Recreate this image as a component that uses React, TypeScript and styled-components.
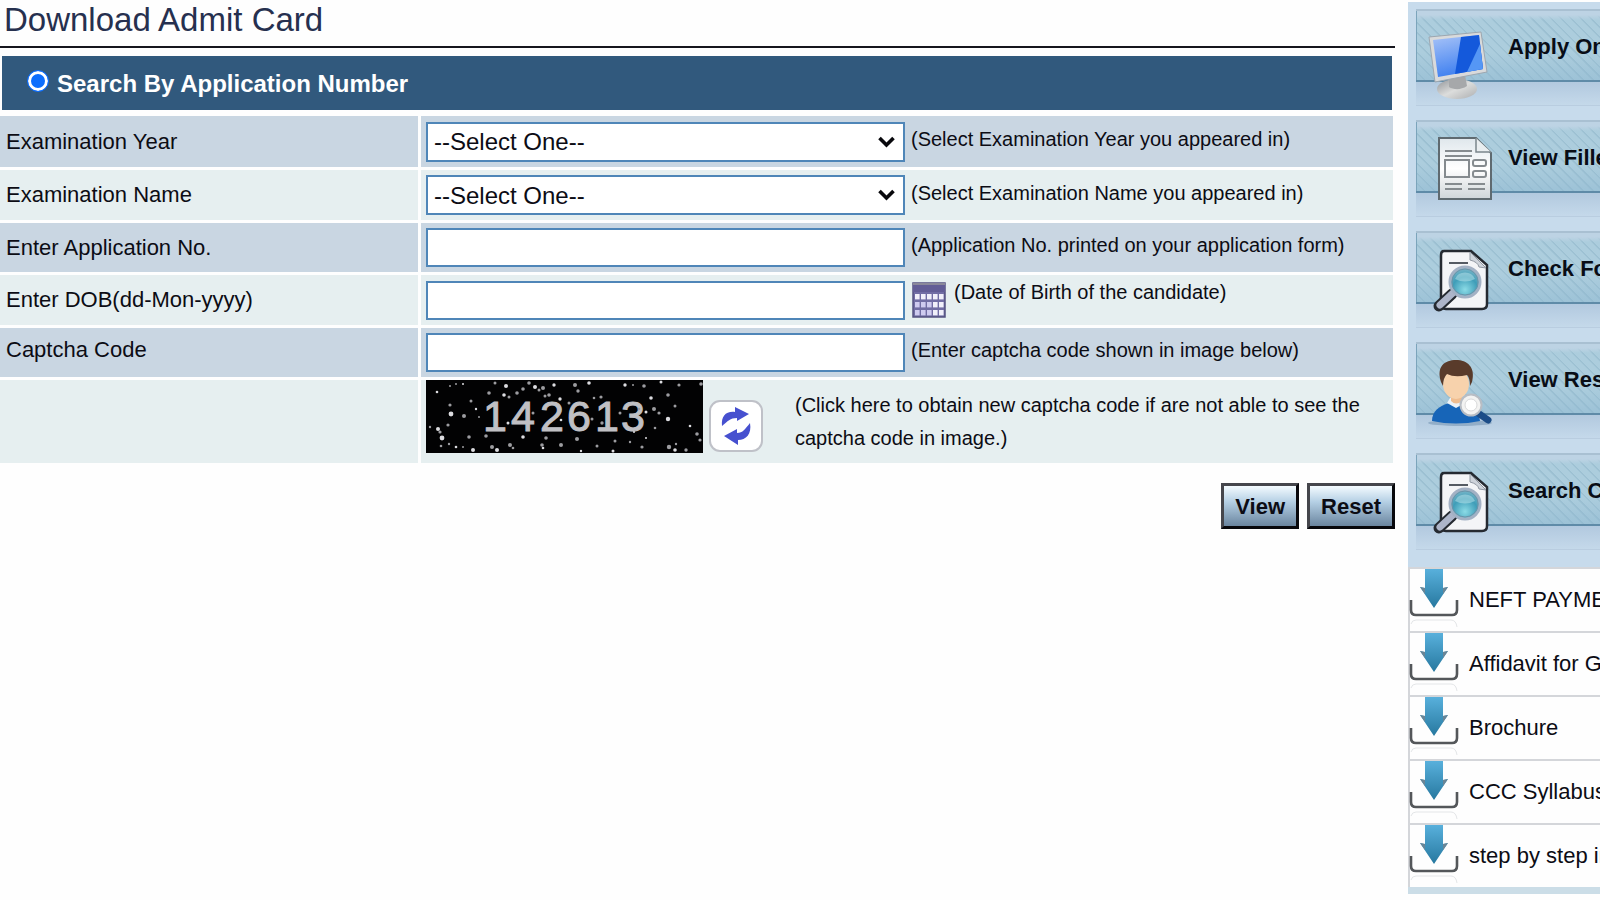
import React from 'react';
import styled, { createGlobalStyle } from 'styled-components';

const GlobalStyle = createGlobalStyle`
  *, *::before, *::after { box-sizing: border-box; }
  body {
    margin: 0;
    overflow-x: hidden;
    background: #fefefe;
    color: #0c0c14;
    font-family: "Liberation Sans", Arial, sans-serif;
    font-size: 22px;
  }
  button, input, select { font-family: inherit; color: inherit; }
  svg { display: block; flex: none; overflow: visible; }
`;

const Page = styled.div`
  display: flex;
  align-items: flex-start;
  gap: 13px;
`;

const Main = styled.main`
  flex: 1;
  min-width: 0;
`;

const Title = styled.h1`
  margin: 0;
  padding: 0 4px 6px;
  border-bottom: 2px solid #15151d;
  color: #26304f;
  font-size: 33px;
  font-weight: 400;
  line-height: 40px;
`;

const Banner = styled.label`
  display: flex;
  align-items: center;
  gap: 8px;
  height: 54px;
  margin: 8px 3px 6px 2px;
  padding: 2px 0 0 25px;
  background: #31597d;
  color: #fff;
  font-size: 24px;
  font-weight: 700;
`;

const Radio = styled.input`
  appearance: none;
  width: 22px;
  height: 22px;
  margin: 0 0 6px;
  border: 1px solid #0d6efd;
  border-radius: 50%;
  background: #0d6efd;
  box-shadow: inset 0 0 0 3px #fff;
`;

const Rows = styled.div`
  display: flex;
  flex-direction: column;
  gap: 3px;
  margin-right: 2px;
`;

const Row = styled.div<{ $h: number; $alt?: boolean }>`
  display: grid;
  grid-template-columns: 43fr 100fr;
  gap: 3px;
  min-height: ${p => p.$h}px;
  > * { background: ${p => (p.$alt ? '#e6eff0' : '#c9d6e2')}; }
`;

const LabelCell = styled.label<{ $lift?: number }>`
  display: flex;
  align-items: center;
  padding: 0 6px ${p => p.$lift ?? 0}px;
`;

const FieldCell = styled.div`
  display: flex;
  align-items: center;
  gap: 6px;
  padding: 0 5px;
`;

const Select = styled.select`
  appearance: none;
  flex: 0 1 479px;
  min-width: 0;
  height: 40px;
  padding: 0 40px 0 6px;
  border: 2px solid #4f86b8;
  border-radius: 0;
  background: transparent;
  font-size: 24px;
`;

const SelectBox = styled.div`
  display: grid;
  flex: 0 1 479px;
  align-items: center;
  background: #fff;
  > * { grid-area: 1 / 1; }
  > svg { justify-self: end; margin-right: 10px; pointer-events: none; }
`;

const TextInput = styled.input`
  flex: 0 1 479px;
  min-width: 0;
  height: 39px;
  padding: 0 7px;
  border: 2px solid #4f86b8;
  background: #fff;
  font-size: 24px;
`;

const Hint = styled.span<{ $lift?: number }>`
  padding-bottom: ${p => p.$lift ?? 4}px;
  font-size: 20px;
  line-height: 33px;
`;

const IconButton = styled.button`
  flex: none;
  margin: 0 2px 0 1px;
  padding: 0;
  border: 0;
  background: none;
`;

const RefreshButton = styled.button`
  display: grid;
  place-items: center;
  flex: none;
  width: 54px;
  height: 52px;
  margin: 9px 26px 0 0;
  padding: 0;
  border: 2px solid #bfc1c8;
  border-radius: 11px;
  background: #fff;
`;

const Captcha = styled.svg`
  align-self: flex-start;
`;

const Actions = styled.div`
  display: flex;
  justify-content: flex-end;
  gap: 8px;
  margin-top: 20px;
`;

const ActionButton = styled.button`
  height: 46px;
  padding: 2px 11px 0;
  border: 3px solid;
  border-color: #45464c #08080c #08080c #45464c;
  background: linear-gradient(#f4fbff 0%, #b4cfe4 40%, #6a859f 100%);
  font-size: 22px;
  font-weight: 700;
`;

const Sidebar = styled.aside`
  flex: 0 0 12%;
  min-width: 0;
  margin-top: 2px;
  overflow: hidden;
  border-bottom: 7px solid #cbdde7;
  background: #c7dbec;
  white-space: nowrap;
`;

const Nav = styled.nav`
  display: flex;
  flex-direction: column;
  gap: 14px;
  padding: 7px 0 17px 8px;
`;

const NavLink = styled.a`
  display: flex;
  height: 97px;
  padding-left: 11px;
  border-top: 2px solid #a9c0d2;
  border-bottom: 1px solid #b9cde0;
  background:
    linear-gradient(#5f8ba8, #5f8ba8) 0 69px / 100% 2px no-repeat,
    linear-gradient(#7ba4bb, #7ba4bb) 0 0 / 1px 69px no-repeat,
    linear-gradient(#bdd3e4, #bdd3e4 4px, transparent) 0 0 / 100% 9px no-repeat,
    linear-gradient(transparent 60%, #8db7d080) 0 0 / 100% 69px no-repeat,
    repeating-linear-gradient(45deg, #accddd 0 5px, #9cc0d2 6px 7px) 0 0 / 100% 69px no-repeat,
    linear-gradient(#b2c9df, #c6daeb) 0 71px / 100% 25px no-repeat;
  color: #090d16;
  font-size: 22px;
  font-weight: 700;
  line-height: 72px;
  text-decoration: none;
  > svg { margin: 18px 12px 0 0; }
`;

const Downloads = styled.ul`
  margin: 0;
  padding: 0;
  list-style: none;
  background: #fefefe;
`;

const DownloadItem = styled.li`
  height: 64px;
  border-top: 2px solid #d4d6da;
  border-left: 2px solid #d4d6da;
`;

const DownloadLink = styled.a`
  display: flex;
  gap: 11px;
  color: inherit;
  line-height: 62px;
  text-decoration: none;
`;

const Chevron = () => (
  <svg width="17" height="12" viewBox="0 0 17 12" aria-hidden="true">
    <path d="M1.5 2 8.5 9 15.5 2" fill="none" stroke="#08080c" strokeWidth="3.6" />
  </svg>
);

const CalendarIcon = () => (
  <svg width="34" height="36" viewBox="0 0 34 36" aria-hidden="true">
    <rect x="1" y="1" width="32" height="34" fill="#716da4" stroke="#555381" strokeWidth="1.5" />
    <rect x="1" y="1" width="32" height="9" fill="#625d96" />
    <path d="M1 2H33" stroke="#8a889a" strokeWidth="2" />
    {[12, 20, 28].map(y =>
      [3, 9, 15, 21, 27].map(x => (
        <rect key={`${x}-${y}`} x={x} y={y} width="4.6" height="5.4" fill={x > 20 || y < 20 ? '#f1f0fa' : '#cfcbf0'} />
      )),
    )}
  </svg>
);

const RefreshIcon = () => (
  <svg width="30" height="38" viewBox="0 0 30 38" aria-hidden="true" fill="#4650cf">
    <path d="M1 19C0 9 5 4 14 5V0L28 7 16 14V11C9 11 7 14 1 19Z" />
    <path d="M29 16C31 27 25 33 17 33V38L3 29 16 22V26C22 26 24 22 29 16Z" />
  </svg>
);

// Speckle positions as x, y, radius.
const specks = [
  [11, 12, 1.3], [24, 6, 1], [30, 4, 1], [37, 4, 1], [69, 3, 1.5], [63, 13, 1.8], [80, 6, 2],
  [97, 9, 1.8], [91, 13, 1.8], [78, 15, 1.8], [83, 17, 1.5], [103, 3, 1.8], [109, 7, 2], [117, 8, 2],
  [123, 15, 1.8], [128, 5, 1.7], [113, 10, 1.5], [119, 16, 1.5], [134, 19, 1.7], [149, 5, 2],
  [152, 11, 1.7], [163, 3, 1.8], [168, 18, 1.3], [175, 17, 1.6], [199, 5, 1.7], [207, 5, 1],
  [218, 6, 1.8], [235, 2, 1.5], [253, 5, 1.6], [275, 4, 1.8], [225, 18, 1.8], [242, 15, 1.8],
  [249, 26, 1.5], [242, 39, 2.2], [233, 33, 1.6], [228, 29, 2], [220, 32, 1.5], [213, 29, 1.3],
  [24, 25, 1.6], [25, 34, 2.4], [38, 36, 2], [45, 21, 1.5], [50, 29, 1.2], [53, 37, 1], [4, 47, 1.2],
  [12, 49, 2], [22, 45, 1.6], [14, 52, 1.6], [16, 58, 2.4], [15, 66, 1.3], [23, 64, 1.2], [30, 67, 1.3],
  [37, 67, 1], [43, 57, 1.8], [47, 70, 2], [60, 56, 1.8], [66, 67, 2], [71, 70, 2], [84, 65, 2],
  [87, 68, 1.3], [97, 57, 1.8], [116, 65, 1.8], [120, 58, 1.8], [117, 68, 1.3], [135, 65, 2],
  [151, 59, 2], [155, 71, 1.2], [171, 66, 1.5], [189, 61, 1.5], [187, 71, 1.5], [204, 62, 1.2],
  [216, 67, 1.6], [220, 58, 1], [229, 48, 1.3], [243, 67, 2.2], [249, 70, 1.8], [250, 64, 1.2],
  [260, 70, 1.7], [264, 46, 1.3], [271, 54, 1.8], [274, 60, 1.6], [208, 52, 1], [176, 43, 1.7],
  [107, 33, 1.5], [135, 40, 1.3], [166, 39, 1.5], [194, 33, 1.5], [82, 43, 1.5], [143, 23, 1.5],
];

const CaptchaImage = () => (
  <Captcha width="277" height="73" viewBox="0 0 277 73" role="img" aria-label="142613">
    <rect width="277" height="73" fill="#020203" />
    <text
      x="57 85 114 141 169 195"
      y="51"
      fill="#c0c0c4"
      stroke="#c0c0c4"
      strokeWidth="1"
      fontSize="43"
      fontFamily="Liberation Sans, Arial, sans-serif"
    >
      142613
    </text>
    {specks.map(([x, y, r], i) => (
      <circle key={i} cx={x} cy={y} r={r} fill={i % 3 ? '#9c9ca0' : '#dcdce0'} />
    ))}
  </Captcha>
);

const MonitorIcon = () => (
  <svg width="69" height="72" viewBox="0 0 69 72" aria-hidden="true">
    <defs>
      <linearGradient id="screen" x1="0" y1="0" x2="0.3" y2="1">
        <stop offset="0" stopColor="#a9c4f8" /><stop offset="1" stopColor="#3f80f0" />
      </linearGradient>
      <linearGradient id="stand" x1="0" y1="0" x2="1" y2="1">
        <stop offset="0" stopColor="#909397" /><stop offset="0.5" stopColor="#dcdddc" /><stop offset="1" stopColor="#acaeb0" />
      </linearGradient>
    </defs>
    <ellipse cx="30" cy="60" rx="20" ry="10" fill="url(#stand)" />
    <path d="M22 49 38 46 40 57C34 61 27 61 22 58Z" fill="#a6a8aa" />
    <path d="M2 8 54 3 60 43 8 53Z" fill="#d9dadb" stroke="#9da7b0" />
    <path d="M6 11 52 6 56 40 11 48Z" fill="url(#screen)" />
    <path d="M34 8 52 6 56 40 28 45Z" fill="#1459db" />
    <path d="M53 15 56 40 40 43Z" fill="#5597f5" />
  </svg>
);

const FormIcon = () => (
  <svg width="69" height="72" viewBox="0 0 69 72" aria-hidden="true">
    <defs>
      <linearGradient id="paper" x1="0" y1="0" x2="0" y2="1">
        <stop offset="0" stopColor="#dfe7ec" /><stop offset=".5" stopColor="#fff" /><stop offset="1" stopColor="#cfd5d9" />
      </linearGradient>
    </defs>
    <path d="M12 -2H49L64 13V59H12Z" fill="url(#paper)" stroke="#5f6a70" strokeWidth="2" />
    <path d="M49 -2V12H64" fill="#e9eef0" stroke="#7b868c" strokeWidth="1.5" />
    <g fill="none" stroke="#858b8f" strokeWidth="2">
      <path d="M18 11H45M18 16H45M18 44H35M18 49H35M41 44H58M41 49H58" />
      <rect x="18" y="20" width="24" height="17" />
      <rect x="46" y="20" width="13" height="6" rx="2" /><rect x="46" y="31" width="13" height="6" rx="2" />
    </g>
  </svg>
);

const SearchDocIcon = () => (
  <svg width="69" height="72" viewBox="0 0 69 72" aria-hidden="true">
    <defs>
      <radialGradient id="lens" cx=".5" cy=".75" r=".7">
        <stop offset="0" stopColor="#8bdbe6" /><stop offset=".6" stopColor="#3f9db8" /><stop offset="1" stopColor="#77b6c8" />
      </radialGradient>
    </defs>
    <path d="M17 0H44L60 14V53Q60 58 55 58H19Q14 58 14 53V4Q14 0 17 0Z" fill="#f4f5f7" stroke="#252a31" strokeWidth="2.5" />
    <path d="M43 1V9Q51 11 52 16L59 17Z" fill="#cfd4db" stroke="#9299a3" />
    <path d="M22 12H41" stroke="#555b63" strokeWidth="2" />
    <path d="M12 55 25 43" stroke="#252a31" strokeWidth="11" strokeLinecap="round" />
    <path d="M13 54 27 41" stroke="#adb5c9" strokeWidth="7" strokeLinecap="round" />
    <circle cx="38" cy="31" r="15" fill="url(#lens)" stroke="#a3b1c4" strokeWidth="3" />
    <circle cx="38" cy="31" r="13" fill="none" stroke="#6d93a8" strokeWidth="1" />
    <path d="M28 28A11 11 0 0 1 48 28Q38 33 28 28Z" fill="#caedf2" opacity=".45" />
  </svg>
);

const PersonIcon = () => (
  <svg width="69" height="72" viewBox="0 0 69 72" aria-hidden="true">
    <ellipse cx="33" cy="61" rx="32" ry="3" fill="#7897b5" opacity=".6" />
    <path d="M5 59C5 49 12 44 22 41H35C45 45 52 49 53 59Q29 64 5 59Z" fill="#1765b8" />
    <path d="M20 41 29 46 38 41 36 36H23Z" fill="#edf2f7" />
    <path d="M24 33H35V39Q29 44 24 39Z" fill="#efbd90" />
    <ellipse cx="29" cy="22" rx="13" ry="15" fill="#f7d2ac" />
    <path d="M14 20C9 4 18-2 29-2S49 5 45 20L43 24Q43 16 40 13Q28 16 20 12Q16 16 16 24Z" fill="#593b2b" />
    <path d="M51 51 61 58" stroke="#1c4d88" strokeWidth="7" strokeLinecap="round" />
    <circle cx="44" cy="43" r="10.5" fill="#f3f3f2" stroke="#b8bdc4" strokeWidth="2" />
    <circle cx="44" cy="43" r="6" fill="#fff" stroke="#d8d9da" />
  </svg>
);

const DownloadIcon = () => (
  <svg width="48" height="60" viewBox="0 0 48 60" aria-hidden="true">
    <defs>
      <linearGradient id="arrow" x1="0" y1="0" x2="0" y2="1">
        <stop offset="0" stopColor="#58b0dc" /><stop offset="1" stopColor="#27789f" />
      </linearGradient>
    </defs>
    <path d="M1 55Q2 51 6 51H41Q46 51 47 58" fill="none" stroke="#e4e6e8" />
    <path d="M1 31V41Q1 46 6 46H42Q47 46 47 41V31" fill="none" stroke="#54575a" strokeWidth="2.6" />
    <path d="M15 0H33V19L38 18 24 39 10 18 15 19Z" fill="url(#arrow)" />
    <path d="M10 18 15 19V25ZM38 18 33 19V25Z" fill="#6b8595" />
  </svg>
);

const navLinks = [
  { text: 'Apply Online', Icon: MonitorIcon },
  { text: 'View Filled Form', Icon: FormIcon },
  { text: 'Check Form Status', Icon: SearchDocIcon },
  { text: 'View Result', Icon: PersonIcon },
  { text: 'Search Candidate', Icon: SearchDocIcon },
];

const downloads = ['NEFT PAYMENT', 'Affidavit for Gap', 'Brochure', 'CCC Syllabus', 'step by step instructions'];

const SelectField = ({ id }: { id: string }) => (
  <SelectBox>
    <Select id={id}>
      <option>--Select One--</option>
    </Select>
    <Chevron />
  </SelectBox>
);

export default function App() {
  return (
    <>
      <GlobalStyle />
      <Page>
        <Main>
          <Title>Download Admit Card</Title>
          <form onSubmit={e => e.preventDefault()}>
            <Banner>
              <Radio type="radio" name="mode" defaultChecked />
              Search By Application Number
            </Banner>
            <Rows>
              <Row $h={51}>
                <LabelCell htmlFor="year">Examination Year</LabelCell>
                <FieldCell>
                  <SelectField id="year" />
                  <Hint>(Select Examination Year you appeared in)</Hint>
                </FieldCell>
              </Row>
              <Row $h={50} $alt>
                <LabelCell htmlFor="exam">Examination Name</LabelCell>
                <FieldCell>
                  <SelectField id="exam" />
                  <Hint>(Select Examination Name you appeared in)</Hint>
                </FieldCell>
              </Row>
              <Row $h={49}>
                <LabelCell htmlFor="appno">Enter Application No.</LabelCell>
                <FieldCell>
                  <TextInput id="appno" type="text" />
                  <Hint>(Application No. printed on your application form)</Hint>
                </FieldCell>
              </Row>
              <Row $h={50} $alt>
                <LabelCell htmlFor="dob">Enter DOB(dd-Mon-yyyy)</LabelCell>
                <FieldCell>
                  <TextInput id="dob" type="text" />
                  <IconButton type="button" aria-label="Pick a date"><CalendarIcon /></IconButton>
                  <Hint $lift={16}>(Date of Birth of the candidate)</Hint>
                </FieldCell>
              </Row>
              <Row $h={49}>
                <LabelCell htmlFor="code" $lift={6}>Captcha Code</LabelCell>
                <FieldCell>
                  <TextInput id="code" type="text" />
                  <Hint>(Enter captcha code shown in image below)</Hint>
                </FieldCell>
              </Row>
              <Row $h={83} $alt>
                <div />
                <FieldCell>
                  <CaptchaImage />
                  <RefreshButton type="button" aria-label="New captcha code"><RefreshIcon /></RefreshButton>
                  <Hint $lift={0}>
                    (Click here to obtain new captcha code if are not able to see the captcha code in image.)
                  </Hint>
                </FieldCell>
              </Row>
            </Rows>
            <Actions>
              <ActionButton type="submit">View</ActionButton>
              <ActionButton type="reset">Reset</ActionButton>
            </Actions>
          </form>
        </Main>
        <Sidebar>
          <Nav>
            {navLinks.map(({ text, Icon }) => (
              <NavLink key={text} href="#"><Icon />{text}</NavLink>
            ))}
          </Nav>
          <Downloads>
            {downloads.map(text => (
              <DownloadItem key={text}>
                <DownloadLink href="#"><DownloadIcon />{text}</DownloadLink>
              </DownloadItem>
            ))}
          </Downloads>
        </Sidebar>
      </Page>
    </>
  );
}
